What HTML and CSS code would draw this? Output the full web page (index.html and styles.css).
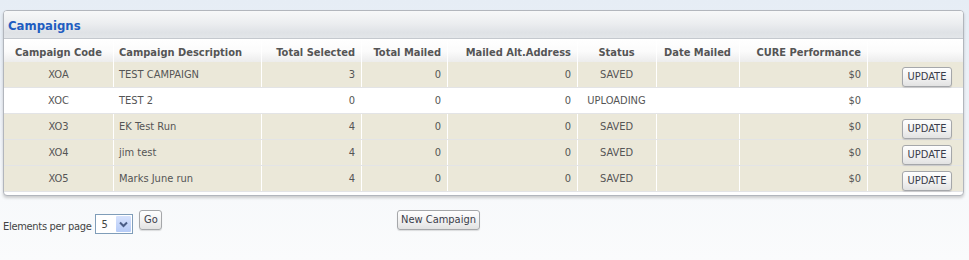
FILE: index.html
```html
<!DOCTYPE html>
<html>
<head>
<meta charset="utf-8">
<link rel="stylesheet" href="styles.css">
</head>
<body>
<div class="panel">
  <div class="panel-title">Campaigns</div>
  <table class="grid">
    <colgroup>
      <col class="c1"><col class="c2"><col class="c3"><col class="c4"><col class="c5"><col class="c6"><col class="c7"><col class="c8"><col class="c9">
    </colgroup>
    <thead>
      <tr>
        <th class="ctr">Campaign Code</th>
        <th class="lft">Campaign Description</th>
        <th class="rgt">Total Selected</th>
        <th class="rgt">Total Mailed</th>
        <th class="rgt">Mailed Alt.Address</th>
        <th class="ctr">Status</th>
        <th class="ctr">Date Mailed</th>
        <th class="rgt">CURE Performance</th>
        <th></th>
      </tr>
    </thead>
    <tbody>
      <tr class="alt">
        <td class="ctr">XOA</td><td class="lft">TEST CAMPAIGN</td><td class="rgt">3</td><td class="rgt">0</td><td class="rgt">0</td><td class="ctr">SAVED</td><td></td><td class="rgt">$0</td><td class="act"><button class="btn btn-update">UPDATE</button></td>
      </tr>
      <tr>
        <td class="ctr">XOC</td><td class="lft">TEST 2</td><td class="rgt">0</td><td class="rgt">0</td><td class="rgt">0</td><td class="ctr">UPLOADING</td><td></td><td class="rgt">$0</td><td class="act"></td>
      </tr>
      <tr class="alt">
        <td class="ctr">XO3</td><td class="lft">EK Test Run</td><td class="rgt">4</td><td class="rgt">0</td><td class="rgt">0</td><td class="ctr">SAVED</td><td></td><td class="rgt">$0</td><td class="act"><button class="btn btn-update">UPDATE</button></td>
      </tr>
      <tr class="alt">
        <td class="ctr">XO4</td><td class="lft">jim test</td><td class="rgt">4</td><td class="rgt">0</td><td class="rgt">0</td><td class="ctr">SAVED</td><td></td><td class="rgt">$0</td><td class="act"><button class="btn btn-update">UPDATE</button></td>
      </tr>
      <tr class="alt">
        <td class="ctr">XO5</td><td class="lft">Marks June run</td><td class="rgt">4</td><td class="rgt">0</td><td class="rgt">0</td><td class="ctr">SAVED</td><td></td><td class="rgt">$0</td><td class="act"><button class="btn btn-update">UPDATE</button></td>
      </tr>
    </tbody>
  </table>
</div>
<div class="footer">
  <div class="pager">
    <span class="pager-label">Elements per page</span>
    <div class="select">
      <span class="select-val">5</span>
      <span class="select-arrow"><svg width="9" height="7" viewBox="0 0 9 7"><path d="M1 1.5 L4.5 5 L8 1.5" fill="none" stroke="#4a5d86" stroke-width="2"/></svg></span>
    </div>
    <button class="btn btn-go">Go</button>
  </div>
  <button class="btn btn-new">New Campaign</button>
</div>
</body>
</html>
```
FILE: styles.css
```css
html, body {
  margin: 0;
  padding: 0;
}
body {
  width: 969px;
  height: 260px;
  background: linear-gradient(#e6edf5 0%, #eef2f8 45%, #f7f9fb 75%, #fafbfc 100%);
  font-family: "DejaVu Sans Condensed", "DejaVu Sans", sans-serif;
  font-stretch: semi-condensed;
  font-size: 11px;
  color: #555;
}
.panel {
  margin: 10px 0 0 3px;
  width: 959px;
  border: 1px solid #b2b6bd;
  border-radius: 4px;
  background: #fff;
  padding-bottom: 3px;
  overflow: hidden;
  box-shadow: 0 2px 3px rgba(0, 0, 0, 0.18);
}
.panel-title {
  height: 20px;
  padding: 7px 0 0 4px;
  border-bottom: 1px solid #c4c8ce;
  background: linear-gradient(#f7f8f9 0%, #eceef0 45%, #dfe2e6 80%, #e3e6e9 100%);
  color: #1f5dc1;
  font-weight: bold;
  font-size: 13px;
  line-height: 15px;
}
.grid {
  width: 959px;
  table-layout: fixed;
  border-collapse: separate;
  border-spacing: 0;
}
.c1 { width: 109px; }
.c2 { width: 148px; }
.c3 { width: 100px; }
.c4 { width: 86px; }
.c5 { width: 130px; }
.c6 { width: 79px; }
.c7 { width: 83px; }
.c8 { width: 128px; }
.c9 { width: 96px; }
.grid th {
  height: 16px;
  padding: 7px 6px 0;
  font-weight: bold;
  color: #555;
  line-height: 13px;
  white-space: nowrap;
  background: linear-gradient(#ffffff 0%, #fbfbfb 55%, #ececec 100%);
  vertical-align: top;
}
.grid th + th {
  box-shadow: inset 1px 0 0 rgba(255, 255, 255, 0.9);
}
.grid td {
  height: 20px;
  padding: 5px 6px 0;
  line-height: 13px;
  vertical-align: top;
  white-space: nowrap;
  border-bottom: 1px solid #e3e4e6;
  color: #555;
}
.grid td + td {
  box-shadow: inset 1px 0 0 #fff;
}
.grid tr.alt td {
  background: #ebe8d9;
}
.grid td:not(.act) {
  padding-top: 6px;
  height: 19px;
}
.ctr { text-align: center; }
.lft { text-align: left; }
.rgt { text-align: right; }
.act {
  text-align: right;
  padding-right: 11px !important;
}
.btn {
  height: 20px;
  padding: 0;
  margin: 0;
  border: 1px solid #a5a7aa;
  border-radius: 3px;
  background: linear-gradient(#fefefe 0%, #f3f3f3 50%, #e2e2e2 100%);
  box-shadow: 0 1px 1px rgba(0, 0, 0, 0.12);
  font-family: "DejaVu Sans Condensed", "DejaVu Sans", sans-serif;
  font-stretch: semi-condensed;
  font-size: 11px;
  color: #3a3d4a;
  text-align: center;
  line-height: 18px;
}
.btn-update { width: 50px; }
.btn-go { width: 23px; margin-left: 6px; }
.btn-new { width: 83px; }
.footer {
  margin-top: 14px;
  display: flex;
  align-items: flex-start;
}
.pager {
  flex: 0 0 397px;
  padding-left: 3px;
  box-sizing: border-box;
  display: flex;
  align-items: flex-start;
}
.pager-label {
  margin-top: 10px;
  line-height: 13px;
  color: #444;
  letter-spacing: -0.3px;
}
.select {
  margin: 4px 0 0 4px;
  width: 36px;
  height: 18px;
  border: 1px solid #7f9db9;
  background: #fff;
  display: flex;
  align-items: stretch;
  justify-content: space-between;
}
.select-val {
  padding: 3px 0 0 5px;
  line-height: 13px;
  color: #444;
}
.select-arrow {
  width: 15px;
  margin: 1px;
  background: linear-gradient(#d6e2fd, #b6cbf7);
  border-radius: 1px;
  display: flex;
  align-items: center;
  justify-content: center;
}
```
